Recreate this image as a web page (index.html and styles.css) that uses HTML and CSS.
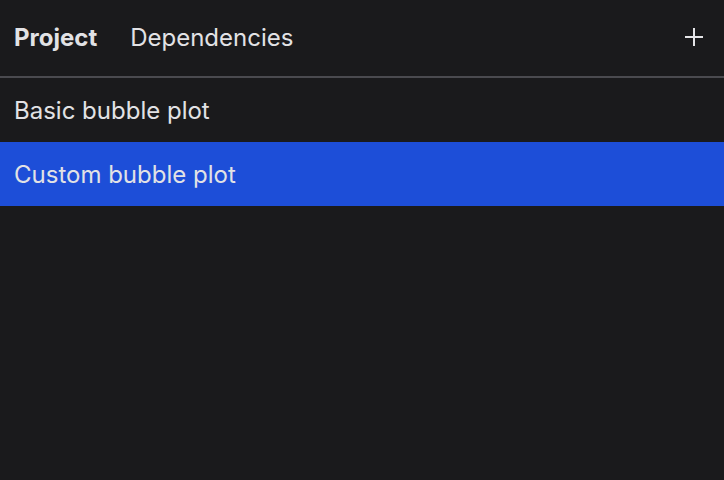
FILE: index.html
```html
<!DOCTYPE html>
<html>
<head>
<meta charset="utf-8">
<link rel="stylesheet" href="styles.css">
</head>
<body>
<div class="panel">
  <header class="tabs">
    <div class="tab-list">
      <span class="tab active">Project</span>
      <span class="tab">Dependencies</span>
    </div>
    <button class="add" aria-label="Add">
      <svg width="20" height="20" viewBox="0 0 20 20"><path d="M10 1v18M1 10h18" stroke="#e4e4e7" stroke-width="2" fill="none"/></svg>
    </button>
  </header>
  <ul class="list">
    <li class="item">Basic bubble plot</li>
    <li class="item selected">Custom bubble plot</li>
  </ul>
</div>
</body>
</html>
```
FILE: styles.css
```css
html, body {
  margin: 0;
  padding: 0;
  background: #1a1a1c;
  width: 724px;
  height: 480px;
  overflow: hidden;
}
.panel {
  font-family: Inter, "Noto Sans", sans-serif;
  color: #e2e2e5;
  font-size: 24px;
}
.tabs {
  height: 74px;
  padding-bottom: 2px;
  border-bottom: 2px solid #4a4a4f;
  display: flex;
  align-items: center;
  justify-content: space-between;
  padding-left: 14px;
  padding-right: 20px;
}
.tab-list {
  display: flex;
  gap: 33px;
}
.tab {
  font-weight: 400;
}
.tab.active {
  font-weight: 700;
}
.add {
  background: none;
  border: 0;
  padding: 0;
  display: flex;
  width: 20px;
  height: 20px;
}
.list {
  list-style: none;
  margin: 0;
  padding: 0;
}
.item {
  height: 64px;
  display: flex;
  align-items: center;
  padding-left: 14px;
}
.item.selected {
  background: #1d4ed8;
}
```
